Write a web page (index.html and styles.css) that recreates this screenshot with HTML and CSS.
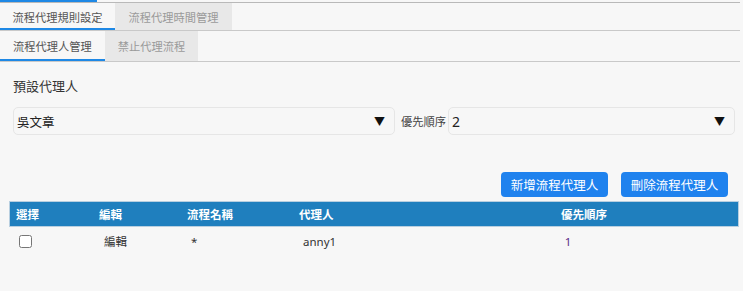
FILE: index.html
```html
<!DOCTYPE html>
<html lang="zh-Hant">
<head>
<meta charset="utf-8">
<link rel="stylesheet" href="styles.css">
</head>
<body>
<div class="top-strip"><span class="top-active"></span></div>
<div class="tabs tabs-main">
  <div class="tab tab-rule active">流程代理規則設定</div>
  <div class="tab tab-time">流程代理時間管理</div>
</div>
<div class="tabs tabs-sub">
  <div class="tab tab-agent active">流程代理人管理</div>
  <div class="tab tab-forbid">禁止代理流程</div>
</div>
<div class="content">
  <div class="label">預設代理人</div>
  <div class="select-row">
    <div class="select select-agent"><span>吳文章</span><span class="arrow">▼</span></div>
    <span class="inline-label">優先順序</span>
    <div class="select select-order"><span class="num">2</span><span class="arrow">▼</span></div>
  </div>
  <div class="btn-row">
    <button class="btn">新增流程代理人</button>
    <button class="btn">刪除流程代理人</button>
  </div>
</div>
<table class="grid">
  <thead>
    <tr>
      <th class="c-sel">選擇</th>
      <th class="c-edit">編輯</th>
      <th class="c-name">流程名稱</th>
      <th class="c-agent">代理人</th>
      <th class="c-order">優先順序</th>
    </tr>
  </thead>
  <tbody>
    <tr>
      <td class="c-sel"><input type="checkbox"></td>
      <td class="c-edit">編輯</td>
      <td class="c-name">*</td>
      <td class="c-agent">anny1</td>
      <td class="c-order"><span class="order-val">1</span></td>
    </tr>
  </tbody>
</table>
</body>
</html>
```
FILE: styles.css
```css
* { box-sizing: border-box; }
body {
  margin: 0;
  background: #f7f7f7;
  font-family: "Noto Sans", "Noto Sans CJK TC", sans-serif;
  color: #333;
}
.top-strip {
  width: 740px;
  height: 3px;
  border-bottom: 1px solid #b9b9b9;
  display: flex;
}
.top-active { width: 97px; height: 2px; background: #1e88e5; }
.tabs {
  width: 740px;
  display: flex;
  border-bottom: 1px solid #c9c9c9;
}
.tabs-main { height: 28px; }
.tabs-sub { height: 31px; }
.tab {
  display: flex;
  align-items: center;
  justify-content: center;
  font-size: 11.25px;
  color: #9a9a9a;
  background: #e8e8e8;
}
.tab.active {
  color: #555;
  background: #f7f7f7;
  box-shadow: inset 0 -2px 0 #1e88e5;
}
.tab-rule { width: 115px; }
.tab-time { width: 117px; }
.tab-agent { width: 105px; }
.tab-forbid { width: 93px; }
.content { padding: 0 0 0 13px; }
.label {
  margin-top: 15px;
  font-size: 13px;
  line-height: 18px;
  color: #333;
}
.select-row {
  margin-top: 12px;
  display: flex;
  align-items: center;
  height: 28px;
}
.select {
  height: 28px;
  border: 1px solid #e6e6e6;
  border-radius: 5px;
  display: flex;
  align-items: center;
  justify-content: space-between;
  padding: 0 9px 0 3px;
  font-size: 12.5px;
  color: #222;
}
.select-agent { width: 382px; }
.select-order { width: 287px; margin-left: 2px; }
.select .num { font-size: 14px; }
.arrow { font-size: 11px; color: #111; }
.inline-label {
  margin-left: 6px;
  font-size: 11.25px;
  color: #444;
}
.btn-row {
  margin-top: 37px;
  width: 715px;
  display: flex;
  justify-content: flex-end;
  gap: 13px;
}
.btn {
  width: 107px;
  height: 25px;
  border: none;
  border-radius: 4px;
  background: #1f82ee;
  color: #fff;
  font-family: inherit;
  font-size: 12.5px;
  padding: 0;
}
.grid {
  margin: 5px 0 0 10px;
  width: 728px;
  border-collapse: collapse;
  font-size: 11.5px;
}
.grid thead tr {
  background: #1f7fbe;
  outline: 1px solid #b8cfe0;
}
.grid th {
  color: #fff;
  font-weight: bold;
  text-align: left;
  height: 24px;
  padding: 0 6px;
}
.grid td {
  height: 30px;
  padding: 0 10px;
  color: #333;
}
.c-sel { width: 83px; }
.c-edit { width: 88px; }
.c-name { width: 112px; }
.c-agent { width: 137px; }
.grid th.c-order { text-align: center; }
.grid td.c-order { text-align: center; padding-right: 42px; }
.grid td.c-sel { padding-left: 5px; }
.grid td.c-edit { padding-left: 11px; }
.grid td.c-agent { padding-left: 10px; }
.order-val { color: #5b2a86; }
.grid input[type="checkbox"] { width: 13px; height: 13px; margin: 3px 3px 3px 4px; vertical-align: middle; }
```
